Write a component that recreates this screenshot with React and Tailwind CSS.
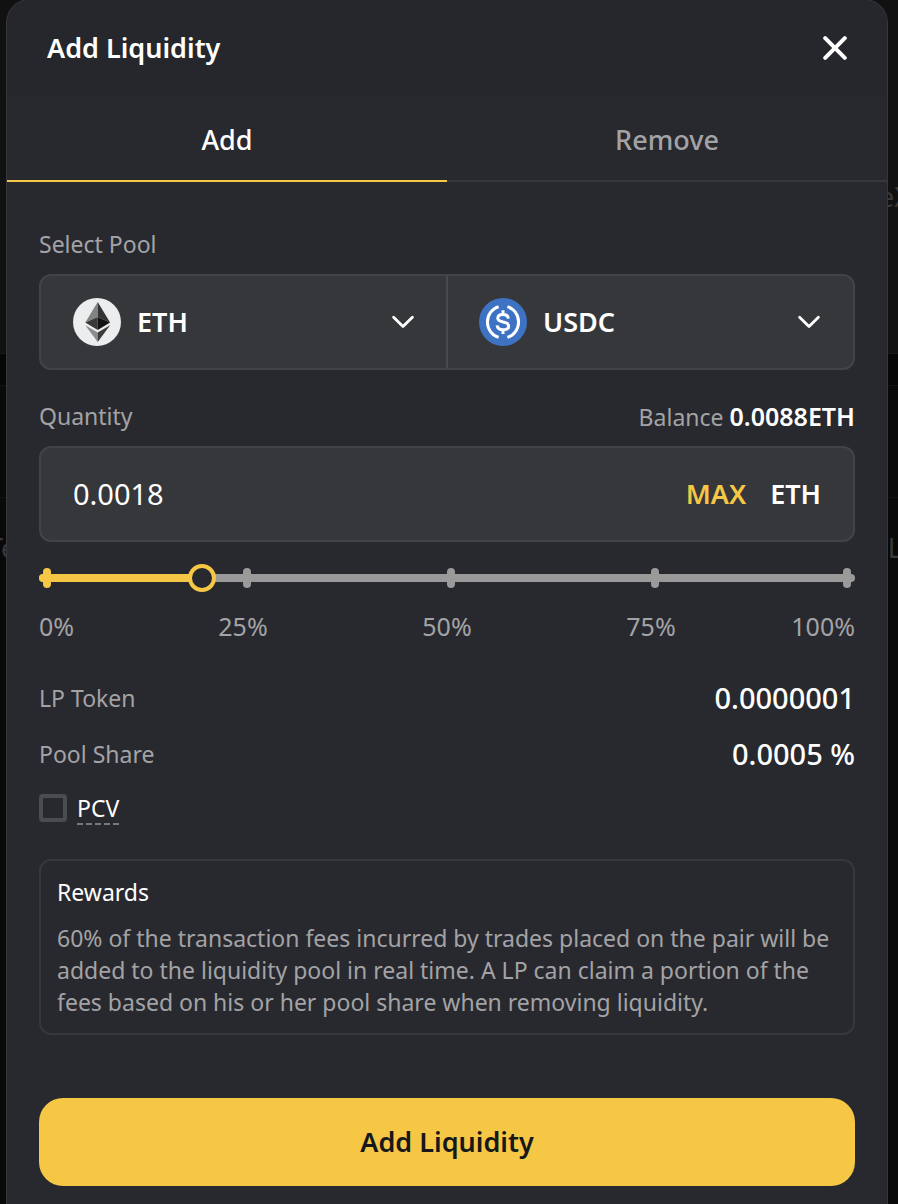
import { useState } from "react";

const MARKS = [
  { value: 0, label: "0%", tick: "left-1", align: "text-left" },
  { value: 25, label: "25%", tick: "left-1/4", align: "text-center" },
  { value: 50, label: "50%", tick: "left-1/2", align: "text-center" },
  { value: 75, label: "75%", tick: "left-3/4", align: "text-center" },
  { value: 100, label: "100%", tick: "right-1", align: "text-right" },
];

function CloseIcon() {
  return (
    <svg viewBox="0 0 24 24" className="w-6 h-6" fill="none" stroke="currentColor" strokeWidth="4" strokeLinecap="round">
      <path d="M2.2 2.2 21.8 21.8M21.8 2.2 2.2 21.8" />
    </svg>
  );
}

function ChevronIcon() {
  return (
    <svg viewBox="0 0 24 24" className="w-6 h-6" fill="none" stroke="currentColor" strokeWidth="2.8" strokeLinecap="round" strokeLinejoin="round">
      <path d="M2.6 7.3 12 16.6l9.4-9.3" />
    </svg>
  );
}

function EthIcon() {
  return (
    <svg viewBox="0 0 48 48" className="w-12 h-12">
      <circle cx="24" cy="24" r="24" fill="#ecedef" />
      <path d="M24.700 4 12.300 24.600l12.400-5.600z" fill="#828282" />
      <path d="M24.700 4 37.100 24.600 24.700 19z" fill="#343434" />
      <path d="M12.300 24.600 24.700 19v12.900z" fill="#393939" />
      <path d="M37.100 24.600 24.700 19v12.900z" fill="#141414" />
      <path d="M12.300 27.200 24.700 34.500V44z" fill="#8c8c8c" />
      <path d="M37.100 27.200 24.700 34.500V44z" fill="#3c3c3b" />
    </svg>
  );
}

function UsdcIcon() {
  return (
    <svg viewBox="0 0 48 48" className="w-12 h-12" fill="none" stroke="#fff" strokeWidth="3">
      <circle cx="24" cy="24" r="24" fill="#3e73c4" stroke="none" />
      <path d="M19.600 8.600a16.200 16.200 0 0 0 0 30.800M28.400 8.600a16.200 16.200 0 0 1 0 30.800" />
      <path d="M29.300 20.600c-.2-2.700-2.200-4-5.300-4-3.300 0-5.200 1.500-5.200 3.700 0 5.300 10.900 2 10.900 7.600 0 2.300-2.200 3.800-5.700 3.800-3.600 0-5.600-1.600-5.900-4.400M24 12.200v4.400M24 31.400v4.500" />
    </svg>
  );
}

function TokenSelect({ icon, symbol }) {
  return (
    <button type="button" aria-haspopup="listbox" className="flex flex-1 items-center h-23 px-8 text-white">
      {icon}
      <span className="ml-4 text-[27px] font-semibold">{symbol}</span>
      <span className="ml-auto">
        <ChevronIcon />
      </span>
    </button>
  );
}

function PercentSlider({ value, onChange }) {
  return (
    <div className="mt-5">
      <div className="relative flex items-center h-8">
        <div className="w-full h-2 rounded-full bg-[#9b9a9b]">
          <div className="h-2 rounded-full bg-[#f6c745]" style={{ width: `${value}%` }} />
        </div>
        {MARKS.map((mark) => (
          <span
            key={mark.value}
            className={`absolute w-2 h-5 rounded-full ${mark.tick} ${mark.value <= value ? "bg-[#f6c745]" : "bg-[#9b9a9b]"}`}
          />
        ))}
        <input
          type="range"
          min="0"
          max="100"
          value={value}
          onChange={(e) => onChange(Number(e.target.value))}
          aria-label="Percent of balance"
          className="absolute -inset-x-3.5 inset-y-0 appearance-none bg-transparent cursor-pointer [&::-webkit-slider-thumb]:appearance-none [&::-webkit-slider-thumb]:box-border [&::-webkit-slider-thumb]:w-7 [&::-webkit-slider-thumb]:h-7 [&::-webkit-slider-thumb]:rounded-full [&::-webkit-slider-thumb]:border-4 [&::-webkit-slider-thumb]:border-solid [&::-webkit-slider-thumb]:border-[#f6c745] [&::-webkit-slider-thumb]:bg-[#28292e]"
        />
      </div>
      <div className="grid grid-cols-[1fr_2fr_2fr_2fr_1fr] mt-4 text-[25px] leading-8 text-[#a3a3a6] whitespace-nowrap">
        {MARKS.map((mark) => (
          <span key={mark.value} className={`min-w-0 ${mark.align}`}>
            {mark.label}
          </span>
        ))}
      </div>
    </div>
  );
}

function InfoRow({ label, value }) {
  return (
    <div className="flex items-center justify-between h-14">
      <span className="text-[23px] text-[#a3a3a6]">{label}</span>
      <span className="text-[29px] font-medium text-white">{value}</span>
    </div>
  );
}

// dimmed page behind the dialog
function Backdrop() {
  return (
    <div aria-hidden="true" className="col-start-1 row-start-1 flex flex-col overflow-hidden bg-[#090909] text-[27px] text-[#39393a]">
      <div className="flex justify-end items-end h-[353px] pb-34 bg-[#111111]">
        <span className="-mr-3 leading-10">eX</span>
      </div>
      <div className="h-8 bg-[#060606] border-t border-[#181818]" />
      <div className="h-28 border-t border-[#141414]" />
      <div className="flex justify-between h-20 pt-8 border-t border-[#111111]">
        <span className="-ml-3 leading-9">Te</span>
        <span className="-mr-1 leading-9">L</span>
      </div>
    </div>
  );
}

export default function App() {
  const [tab, setTab] = useState("add");
  const [quantity, setQuantity] = useState("0.0018");
  const [percent, setPercent] = useState(20);
  const [pcv, setPcv] = useState(false);

  return (
    <div className="grid grid-cols-1 min-h-screen overflow-hidden bg-[#090909] font-['Noto_Sans',sans-serif]">
      <Backdrop />

      <div role="dialog" aria-label="Add Liquidity" className="col-start-1 row-start-1 z-10 -mt-px ml-1.5 mr-2.5 rounded-t-3xl border border-b-0 border-[#37383c] bg-[#28292e] overflow-hidden">
        {/* Header */}
        <div className="flex items-center justify-between h-24 px-10 bg-[#26272c]">
          <h2 className="text-[27px] font-semibold text-white">Add Liquidity</h2>
          <button type="button" aria-label="Close" className="text-white">
            <CloseIcon />
          </button>
        </div>

        {/* Tabs */}
        <div role="tablist" className="grid grid-cols-2 h-[86px] text-[27px] font-medium">
          <button
            type="button"
            role="tab"
            aria-selected={tab === "add"}
            onClick={() => setTab("add")}
            className={`pt-1 border-b-2 ${tab === "add" ? "border-[#f6c745] text-white" : "border-[#37383c] text-[#a3a3a6]"}`}
          >
            Add
          </button>
          <button
            type="button"
            role="tab"
            aria-selected={tab === "remove"}
            onClick={() => setTab("remove")}
            className={`pt-1 border-b-2 ${tab === "remove" ? "border-[#f6c745] text-white" : "border-[#37383c] text-[#a3a3a6]"}`}
          >
            Remove
          </button>
        </div>

        <div className="px-8 pt-[46px] pb-4">
          {/* Pool */}
          <p className="text-[23px] leading-8 text-[#a3a3a6]">Select Pool</p>
          <div className="flex mt-3.5 rounded-xl border-2 border-[#424347] bg-[#36373b]">
            <TokenSelect icon={<EthIcon />} symbol="ETH" />
            <div className="w-0.5 -mx-px bg-[#48494d]" />
            <TokenSelect icon={<UsdcIcon />} symbol="USDC" />
          </div>

          {/* Quantity */}
          <div className="flex items-center justify-between h-8 mt-[30px] leading-8 text-[#a3a3a6]">
            <label htmlFor="quantity" className="text-[23px]">Quantity</label>
            <p className="flex items-baseline gap-1.5 text-[23px]">
              Balance
              <span className="text-[25px] font-semibold text-white">0.0088ETH</span>
            </p>
          </div>
          <div className="flex items-center h-24 mt-3.5 px-8 rounded-xl border-2 border-[#424347] bg-[#36373b] text-[27px] font-semibold">
            <input
              id="quantity"
              type="text"
              value={quantity}
              onChange={(e) => setQuantity(e.target.value)}
              className="flex-1 min-w-0 bg-transparent text-[29px] font-normal text-white outline-none"
            />
            <button type="button" className="text-[#f6c745]">MAX</button>
            <span className="ml-6 text-white">ETH</span>
          </div>

          <PercentSlider value={percent} onChange={setPercent} />

          {/* Summary */}
          <div className="mt-7">
            <InfoRow label="LP Token" value="0.0000001" />
            <InfoRow label="Pool Share" value="0.0005 %" />
          </div>

          <label className="flex items-start gap-2.5 mt-3 w-fit text-[23px] text-white">
            <input
              type="checkbox"
              checked={pcv}
              onChange={(e) => setPcv(e.target.checked)}
              className="appearance-none w-7 h-7 rounded-sm border-4 border-[#4b4c50] checked:bg-[#f6c745]"
            />
            <span className="leading-7 pb-px border-b-2 border-dashed border-[#77787b]">PCV</span>
          </label>

          {/* Rewards */}
          <div className="mt-[34px] px-4 py-[15px] rounded-xl border-2 border-[#37383c] text-[23px] leading-8">
            <h3 className="text-white">Rewards</h3>
            <p className="mt-3.5 text-[#a3a3a6]">
              60% of the transaction fees incurred by trades placed on the pair will be added to the
              liquidity pool in real time. A LP can claim a portion of the fees based on his or her
              pool share when removing liquidity.
            </p>
          </div>

          <button type="button" className="w-full h-22 mt-[63px] rounded-3xl bg-[#f6c745] text-[27px] font-semibold text-[#17181a]">
            Add Liquidity
          </button>
        </div>
      </div>
    </div>
  );
}
